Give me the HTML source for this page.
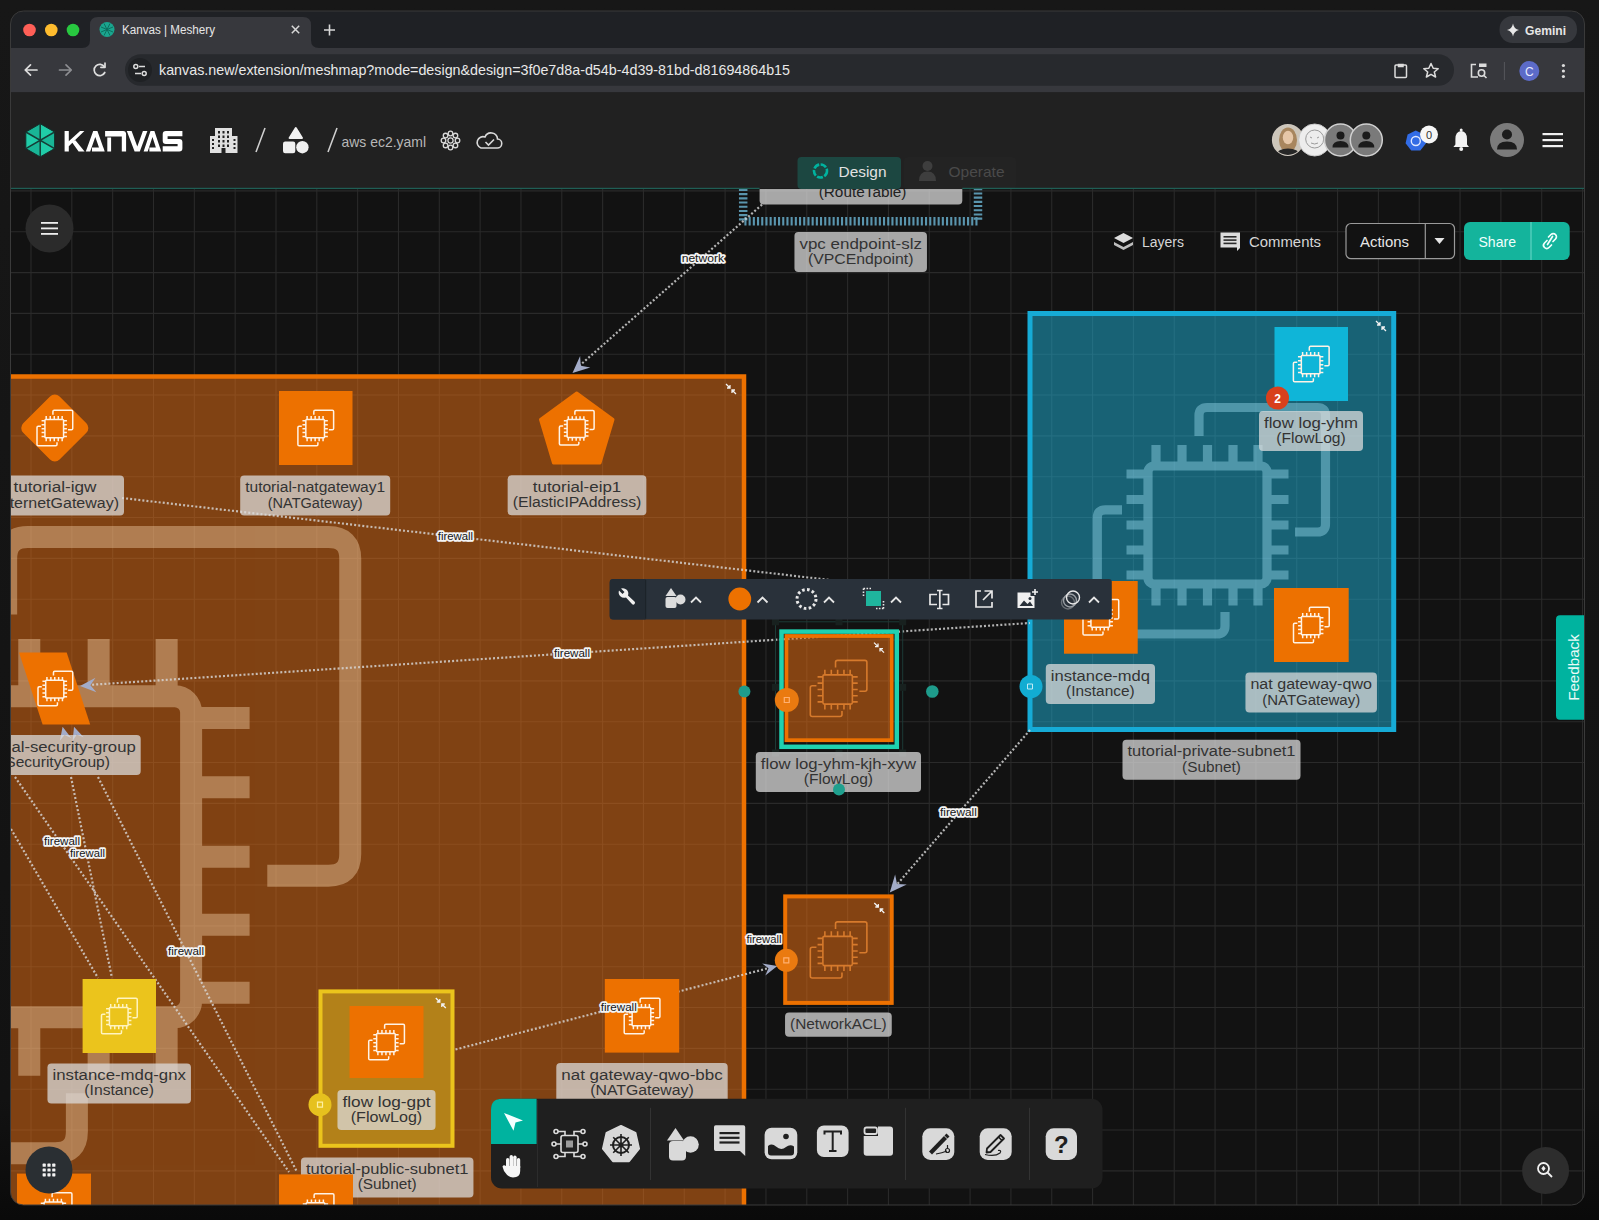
<!DOCTYPE html><html><head><meta charset="utf-8"><title>Kanvas | Meshery</title><style>html,body{margin:0;padding:0;background:#141414;width:1599px;height:1220px;overflow:hidden}svg{display:block}</style></head><body><svg width="1599" height="1220" viewBox="0 0 1599 1220" font-family='"Liberation Sans", sans-serif'><defs><clipPath id="win"><rect x="10.5" y="11" width="1574" height="1194" rx="13"/></clipPath><clipPath id="canvas"><rect x="0" y="189" width="1599" height="1031"/></clipPath></defs><defs><linearGradient id="outer" x1="0" y1="0" x2="0" y2="1"><stop offset="0" stop-color="#171717"/><stop offset="0.9" stop-color="#121212"/><stop offset="1" stop-color="#0a0a0a"/></linearGradient></defs><rect width="1599" height="1220" fill="url(#outer)"/><g clip-path="url(#win)"><g clip-path="url(#canvas)"><rect x="0" y="189" width="1599" height="1031" fill="#121212"/><path d="M-9.83,189 V1220 M31.00,189 V1220 M71.83,189 V1220 M112.66,189 V1220 M153.49,189 V1220 M194.32,189 V1220 M235.15,189 V1220 M275.98,189 V1220 M316.81,189 V1220 M357.64,189 V1220 M398.47,189 V1220 M439.30,189 V1220 M480.13,189 V1220 M520.96,189 V1220 M561.79,189 V1220 M602.62,189 V1220 M643.45,189 V1220 M684.28,189 V1220 M725.11,189 V1220 M765.94,189 V1220 M806.77,189 V1220 M847.60,189 V1220 M888.43,189 V1220 M929.26,189 V1220 M970.09,189 V1220 M1010.92,189 V1220 M1051.75,189 V1220 M1092.58,189 V1220 M1133.41,189 V1220 M1174.24,189 V1220 M1215.07,189 V1220 M1255.90,189 V1220 M1296.73,189 V1220 M1337.56,189 V1220 M1378.39,189 V1220 M1419.22,189 V1220 M1460.05,189 V1220 M1500.88,189 V1220 M1541.71,189 V1220 M1582.54,189 V1220 M0,190.92 H1599 M0,231.75 H1599 M0,272.58 H1599 M0,313.41 H1599 M0,354.24 H1599 M0,395.07 H1599 M0,435.90 H1599 M0,476.73 H1599 M0,517.56 H1599 M0,558.39 H1599 M0,599.22 H1599 M0,640.05 H1599 M0,680.88 H1599 M0,721.71 H1599 M0,762.54 H1599 M0,803.37 H1599 M0,844.20 H1599 M0,885.03 H1599 M0,925.86 H1599 M0,966.69 H1599 M0,1007.52 H1599 M0,1048.35 H1599 M0,1089.18 H1599 M0,1130.01 H1599 M0,1170.84 H1599 M0,1211.67 H1599" stroke="#2a2a2a" stroke-width="1.1"/><rect x="743.2" y="150" width="234.8" height="71.3" fill="none" stroke="#5a95ae" stroke-width="8.5" stroke-dasharray="2.1 2.1"/><rect x="-700" y="376.5" width="1444" height="1000" fill="rgba(237,113,20,0.5)" stroke="#ed7100" stroke-width="4.5"/><rect x="1030" y="313.5" width="363.7" height="416" fill="rgba(30,178,215,0.5)" stroke="#16abd6" stroke-width="5"/><g fill="none" stroke="#a8eaff" stroke-width="9.2" opacity="0.38" stroke-linejoin="round"><path d="M1199.00,436.00 V415.50 Q1199.00,407.50 1207.00,407.50 H1317.50 Q1325.50,407.50 1325.50,415.50 V524.00 Q1325.50,532.00 1317.50,532.00 H1295.00"/><path d="M1122.00,509.80 H1105.30 Q1097.30,509.80 1097.30,517.80 V626.00 Q1097.30,634.00 1105.30,634.00 H1217.00 Q1225.00,634.00 1225.00,626.00 V612.00"/><rect x="1148.00" y="466.00" width="119.00" height="118.00" rx="6.00"/><path d="M1156.00,445.00 V466.00 M1156.00,584.00 V605.50 M1182.00,445.00 V466.00 M1182.00,584.00 V605.50 M1207.50,445.00 V466.00 M1207.50,584.00 V605.50 M1233.00,445.00 V466.00 M1233.00,584.00 V605.50 M1258.00,445.00 V466.00 M1258.00,584.00 V605.50 M1126.50,474.00 H1148.00 M1267.00,474.00 H1288.50 M1126.50,499.50 H1148.00 M1267.00,499.50 H1288.50 M1126.50,525.00 H1148.00 M1267.00,525.00 H1288.50 M1126.50,550.00 H1148.00 M1267.00,550.00 H1288.50 M1126.50,575.00 H1148.00 M1267.00,575.00 H1288.50" stroke-linecap="butt"/></g><g fill="none" stroke="#ffe0b8" stroke-width="22" opacity="0.38" stroke-linejoin="round"><path d="M6.16,614.60 V558.84 Q6.16,537.08 27.92,537.08 H328.48 Q350.24,537.08 350.24,558.84 V853.96 Q350.24,875.72 328.48,875.72 H267.28"/><path d="M-203.28,815.34 H-248.70 Q-270.46,815.34 -270.46,837.10 V1131.40 Q-270.46,1153.16 -248.70,1153.16 H55.12 Q76.88,1153.16 76.88,1131.40 V1093.32"/><rect x="-132.56" y="696.20" width="323.68" height="320.96" rx="16.32"/><path d="M-110.80,639.08 V696.20 M-110.80,1017.16 V1075.64 M-40.08,639.08 V696.20 M-40.08,1017.16 V1075.64 M29.28,639.08 V696.20 M29.28,1017.16 V1075.64 M98.64,639.08 V696.20 M98.64,1017.16 V1075.64 M166.64,639.08 V696.20 M166.64,1017.16 V1075.64 M-191.04,717.96 H-132.56 M191.12,717.96 H249.60 M-191.04,787.32 H-132.56 M191.12,787.32 H249.60 M-191.04,856.68 H-132.56 M191.12,856.68 H249.60 M-191.04,924.68 H-132.56 M191.12,924.68 H249.60 M-191.04,992.68 H-132.56 M191.12,992.68 H249.60" stroke-linecap="butt"/></g><line x1="762" y1="204.6" x2="578" y2="367" stroke="rgba(215,215,215,0.82)" stroke-width="2.2" stroke-dasharray="2 2.1"/><path d="M572.50,373.00 L580.13,355.99 L580.76,365.66 L590.29,367.43 Z" fill="#a3acc8"/><line x1="122" y1="498" x2="830" y2="580" stroke="rgba(215,215,215,0.82)" stroke-width="2.2" stroke-dasharray="2 2.1"/><line x1="88" y1="685" x2="1030" y2="623" stroke="rgba(215,215,215,0.82)" stroke-width="2.2" stroke-dasharray="2 2.1"/><path d="M80.00,686.00 L95.49,677.76 L90.38,685.31 L96.44,692.13 Z" fill="#a3acc8"/><line x1="1030" y1="730" x2="894" y2="888" stroke="rgba(215,215,215,0.82)" stroke-width="2.2" stroke-dasharray="2 2.1"/><path d="M889.80,892.40 L895.12,874.53 L897.02,884.04 L906.70,884.53 Z" fill="#a3acc8"/><line x1="455.5" y1="1049.5" x2="771" y2="967.5" stroke="rgba(215,215,215,0.82)" stroke-width="2.2" stroke-dasharray="2 2.1"/><path d="M777.30,966.00 L765.33,975.61 L768.49,968.29 L762.17,963.42 Z" fill="#a3acc8"/><line x1="11" y1="829" x2="98" y2="978" stroke="rgba(215,215,215,0.82)" stroke-width="2.2" stroke-dasharray="2 2.1"/><line x1="15" y1="777" x2="289" y2="1172" stroke="rgba(215,215,215,0.82)" stroke-width="2.2" stroke-dasharray="2 2.1"/><line x1="71" y1="777" x2="112" y2="978" stroke="rgba(215,215,215,0.82)" stroke-width="2.2" stroke-dasharray="2 2.1"/><line x1="98" y1="777" x2="297" y2="1172" stroke="rgba(215,215,215,0.82)" stroke-width="2.2" stroke-dasharray="2 2.1"/><path d="M62.60,726.70 L71.24,738.04 L64.51,734.93 L59.85,740.69 Z" fill="#a3acc8"/><path d="M74.00,726.70 L83.70,737.14 L76.70,734.71 L72.62,740.89 Z" fill="#a3acc8"/><path d="M54.8,401.2 L81.6,428 L54.8,454.8 L27.999999999999996,428 Z" fill="#ed7100" stroke="#ed7100" stroke-width="13.5" stroke-linejoin="round"/><g fill="none" stroke="#fff3e6" stroke-width="1.5" opacity="1.0" stroke-linejoin="round"><path d="M52.92,414.70 V411.49 Q52.92,410.23 54.17,410.23 H71.47 Q72.72,410.23 72.72,411.49 V428.47 Q72.72,429.72 71.47,429.72 H67.95"/><path d="M40.87,426.25 H38.26 Q37.00,426.25 37.00,427.50 V444.43 Q37.00,445.69 38.26,445.69 H55.74 Q56.99,445.69 56.99,444.43 V442.24"/><rect x="44.94" y="419.39" width="18.63" height="18.47" rx="0.94"/><path d="M46.19,416.10 V419.39 M46.19,437.86 V441.23 M50.26,416.10 V419.39 M50.26,437.86 V441.23 M54.25,416.10 V419.39 M54.25,437.86 V441.23 M58.24,416.10 V419.39 M58.24,437.86 V441.23 M62.16,416.10 V419.39 M62.16,437.86 V441.23 M41.57,420.64 H44.94 M63.57,420.64 H66.93 M41.57,424.63 H44.94 M63.57,424.63 H66.93 M41.57,428.63 H44.94 M63.57,428.63 H66.93 M41.57,432.54 H44.94 M63.57,432.54 H66.93 M41.57,436.45 H44.94 M63.57,436.45 H66.93" stroke-linecap="butt"/></g><rect x="-14.00" y="475.50" width="138.00" height="40.00" rx="4" fill="rgba(220,220,220,0.74)"/><text x="55.00" y="492.09" text-anchor="middle" font-size="14" textLength="82.90" lengthAdjust="spacingAndGlyphs" fill="#333333">tutorial-igw</text><text x="55.00" y="507.59" text-anchor="middle" font-size="14" textLength="128.00" lengthAdjust="spacingAndGlyphs" fill="#333333">(InternetGateway)</text><rect x="279" y="391" width="73.5" height="74" fill="#ed7100"/><g fill="none" stroke="#fff3e6" stroke-width="1.5" opacity="1.0" stroke-linejoin="round"><path d="M313.82,414.70 V411.49 Q313.82,410.23 315.07,410.23 H332.37 Q333.62,410.23 333.62,411.49 V428.47 Q333.62,429.72 332.37,429.72 H328.85"/><path d="M301.77,426.25 H299.16 Q297.90,426.25 297.90,427.50 V444.43 Q297.90,445.69 299.16,445.69 H316.64 Q317.89,445.69 317.89,444.43 V442.24"/><rect x="305.84" y="419.39" width="18.63" height="18.47" rx="0.94"/><path d="M307.09,416.10 V419.39 M307.09,437.86 V441.23 M311.16,416.10 V419.39 M311.16,437.86 V441.23 M315.15,416.10 V419.39 M315.15,437.86 V441.23 M319.14,416.10 V419.39 M319.14,437.86 V441.23 M323.06,416.10 V419.39 M323.06,437.86 V441.23 M302.47,420.64 H305.84 M324.47,420.64 H327.83 M302.47,424.63 H305.84 M324.47,424.63 H327.83 M302.47,428.63 H305.84 M324.47,428.63 H327.83 M302.47,432.54 H305.84 M324.47,432.54 H327.83 M302.47,436.45 H305.84 M324.47,436.45 H327.83" stroke-linecap="butt"/></g><rect x="240.20" y="475.50" width="150.00" height="40.00" rx="4" fill="rgba(220,220,220,0.74)"/><text x="315.20" y="492.09" text-anchor="middle" font-size="14" textLength="140.00" lengthAdjust="spacingAndGlyphs" fill="#333333">tutorial-natgateway1</text><text x="315.20" y="507.59" text-anchor="middle" font-size="14" textLength="94.82" lengthAdjust="spacingAndGlyphs" fill="#333333">(NATGateway)</text><path d="M576.7,393 L613,419.5 L600,463 H553.5 L540.5,419.5 Z" fill="#ed7100" stroke="#ed7100" stroke-width="3" stroke-linejoin="round"/><g fill="none" stroke="#fff3e6" stroke-width="1.5" opacity="1.0" stroke-linejoin="round"><path d="M574.87,414.87 V411.75 Q574.87,410.53 576.09,410.53 H592.91 Q594.12,410.53 594.12,411.75 V428.26 Q594.12,429.47 592.91,429.47 H589.48"/><path d="M563.16,426.10 H560.62 Q559.40,426.10 559.40,427.31 V443.78 Q559.40,445.00 560.62,445.00 H577.61 Q578.83,445.00 578.83,443.78 V441.65"/><rect x="567.11" y="419.43" width="18.11" height="17.96" rx="0.91"/><path d="M568.33,416.23 V419.43 M568.33,437.39 V440.66 M572.29,416.23 V419.43 M572.29,437.39 V440.66 M576.17,416.23 V419.43 M576.17,437.39 V440.66 M580.05,416.23 V419.43 M580.05,437.39 V440.66 M583.85,416.23 V419.43 M583.85,437.39 V440.66 M563.84,420.65 H567.11 M585.22,420.65 H588.49 M563.84,424.53 H567.11 M585.22,424.53 H588.49 M563.84,428.41 H567.11 M585.22,428.41 H588.49 M563.84,432.21 H567.11 M585.22,432.21 H588.49 M563.84,436.02 H567.11 M585.22,436.02 H588.49" stroke-linecap="butt"/></g><rect x="507.65" y="475.30" width="138.70" height="40.00" rx="4" fill="rgba(220,220,220,0.74)"/><text x="577.00" y="491.89" text-anchor="middle" font-size="14" textLength="88.46" lengthAdjust="spacingAndGlyphs" fill="#333333">tutorial-eip1</text><text x="577.00" y="507.39" text-anchor="middle" font-size="14" textLength="128.70" lengthAdjust="spacingAndGlyphs" fill="#333333">(ElasticIPAddress)</text><path d="M19,652.4 L66.7,652.4 L90.2,724.6 L42.6,724.6 Z" fill="#ed7100"/><g fill="none" stroke="#fff3e6" stroke-width="1.5" opacity="1.0" stroke-linejoin="round"><path d="M53.47,675.57 V672.45 Q53.47,671.23 54.69,671.23 H71.51 Q72.72,671.23 72.72,672.45 V688.96 Q72.72,690.17 71.51,690.17 H68.08"/><path d="M41.76,686.80 H39.22 Q38.00,686.80 38.00,688.01 V704.48 Q38.00,705.70 39.22,705.70 H56.21 Q57.43,705.70 57.43,704.48 V702.35"/><rect x="45.71" y="680.13" width="18.11" height="17.96" rx="0.91"/><path d="M46.93,676.93 V680.13 M46.93,698.09 V701.36 M50.89,676.93 V680.13 M50.89,698.09 V701.36 M54.77,676.93 V680.13 M54.77,698.09 V701.36 M58.65,676.93 V680.13 M58.65,698.09 V701.36 M62.45,676.93 V680.13 M62.45,698.09 V701.36 M42.44,681.35 H45.71 M63.82,681.35 H67.09 M42.44,685.23 H45.71 M63.82,685.23 H67.09 M42.44,689.11 H45.71 M63.82,689.11 H67.09 M42.44,692.91 H45.71 M63.82,692.91 H67.09 M42.44,696.72 H45.71 M63.82,696.72 H67.09" stroke-linecap="butt"/></g><rect x="-30.70" y="735.00" width="171.40" height="40.00" rx="4" fill="rgba(220,220,220,0.74)"/><text x="55.00" y="751.59" text-anchor="middle" font-size="14" textLength="161.40" lengthAdjust="spacingAndGlyphs" fill="#333333">tutorial-security-group</text><text x="55.00" y="767.09" text-anchor="middle" font-size="14" textLength="109.87" lengthAdjust="spacingAndGlyphs" fill="#333333">(SecurityGroup)</text><rect x="1274.5" y="327" width="73.5" height="74" fill="#0fb5d8"/><g fill="none" stroke="#fff3e6" stroke-width="1.5" opacity="1.0" stroke-linejoin="round"><path d="M1309.32,350.70 V347.49 Q1309.32,346.23 1310.57,346.23 H1327.87 Q1329.12,346.23 1329.12,347.49 V364.47 Q1329.12,365.72 1327.87,365.72 H1324.35"/><path d="M1297.27,362.25 H1294.66 Q1293.40,362.25 1293.40,363.50 V380.43 Q1293.40,381.69 1294.66,381.69 H1312.14 Q1313.39,381.69 1313.39,380.43 V378.24"/><rect x="1301.34" y="355.39" width="18.63" height="18.47" rx="0.94"/><path d="M1302.59,352.10 V355.39 M1302.59,373.86 V377.23 M1306.66,352.10 V355.39 M1306.66,373.86 V377.23 M1310.65,352.10 V355.39 M1310.65,373.86 V377.23 M1314.64,352.10 V355.39 M1314.64,373.86 V377.23 M1318.56,352.10 V355.39 M1318.56,373.86 V377.23 M1297.97,356.64 H1301.34 M1319.97,356.64 H1323.33 M1297.97,360.63 H1301.34 M1319.97,360.63 H1323.33 M1297.97,364.63 H1301.34 M1319.97,364.63 H1323.33 M1297.97,368.54 H1301.34 M1319.97,368.54 H1323.33 M1297.97,372.45 H1301.34 M1319.97,372.45 H1323.33" stroke-linecap="butt"/></g><rect x="1259.00" y="411.00" width="104.00" height="40.00" rx="4" fill="rgba(220,220,220,0.74)"/><text x="1311.00" y="427.59" text-anchor="middle" font-size="14" textLength="94.00" lengthAdjust="spacingAndGlyphs" fill="#333333">flow log-yhm</text><text x="1311.00" y="443.09" text-anchor="middle" font-size="14" textLength="69.45" lengthAdjust="spacingAndGlyphs" fill="#333333">(FlowLog)</text><circle cx="1277.5" cy="398" r="11.5" fill="#d8401c"/><text x="1277.5" y="402.5" text-anchor="middle" font-size="12" font-weight="700" fill="#fff">2</text><rect x="1064" y="581" width="73.7" height="72.7" fill="#ed7100"/><g fill="none" stroke="#fff3e6" stroke-width="1.5" opacity="1.0" stroke-linejoin="round"><path d="M1098.92,604.00 V600.79 Q1098.92,599.53 1100.17,599.53 H1117.47 Q1118.72,599.53 1118.72,600.79 V617.77 Q1118.72,619.02 1117.47,619.02 H1113.95"/><path d="M1086.87,615.55 H1084.26 Q1083.00,615.55 1083.00,616.80 V633.73 Q1083.00,634.99 1084.26,634.99 H1101.74 Q1102.99,634.99 1102.99,633.73 V631.54"/><rect x="1090.94" y="608.69" width="18.63" height="18.47" rx="0.94"/><path d="M1092.19,605.40 V608.69 M1092.19,627.16 V630.53 M1096.26,605.40 V608.69 M1096.26,627.16 V630.53 M1100.25,605.40 V608.69 M1100.25,627.16 V630.53 M1104.24,605.40 V608.69 M1104.24,627.16 V630.53 M1108.16,605.40 V608.69 M1108.16,627.16 V630.53 M1087.57,609.94 H1090.94 M1109.57,609.94 H1112.93 M1087.57,613.93 H1090.94 M1109.57,613.93 H1112.93 M1087.57,617.93 H1090.94 M1109.57,617.93 H1112.93 M1087.57,621.84 H1090.94 M1109.57,621.84 H1112.93 M1087.57,625.75 H1090.94 M1109.57,625.75 H1112.93" stroke-linecap="butt"/></g><rect x="1045.80" y="664.00" width="109.20" height="40.00" rx="4" fill="rgba(220,220,220,0.74)"/><text x="1100.40" y="680.59" text-anchor="middle" font-size="14" textLength="99.20" lengthAdjust="spacingAndGlyphs" fill="#333333">instance-mdq</text><text x="1100.40" y="696.09" text-anchor="middle" font-size="14" textLength="68.53" lengthAdjust="spacingAndGlyphs" fill="#333333">(Instance)</text><rect x="1274" y="588" width="74.7" height="74" fill="#ed7100"/><g fill="none" stroke="#fff3e6" stroke-width="1.5" opacity="1.0" stroke-linejoin="round"><path d="M1309.42,611.70 V608.49 Q1309.42,607.23 1310.67,607.23 H1327.97 Q1329.22,607.23 1329.22,608.49 V625.47 Q1329.22,626.72 1327.97,626.72 H1324.45"/><path d="M1297.37,623.25 H1294.76 Q1293.50,623.25 1293.50,624.50 V641.43 Q1293.50,642.69 1294.76,642.69 H1312.24 Q1313.49,642.69 1313.49,641.43 V639.24"/><rect x="1301.44" y="616.39" width="18.63" height="18.47" rx="0.94"/><path d="M1302.69,613.10 V616.39 M1302.69,634.86 V638.23 M1306.76,613.10 V616.39 M1306.76,634.86 V638.23 M1310.75,613.10 V616.39 M1310.75,634.86 V638.23 M1314.74,613.10 V616.39 M1314.74,634.86 V638.23 M1318.66,613.10 V616.39 M1318.66,634.86 V638.23 M1298.07,617.64 H1301.44 M1320.07,617.64 H1323.43 M1298.07,621.63 H1301.44 M1320.07,621.63 H1323.43 M1298.07,625.63 H1301.44 M1320.07,625.63 H1323.43 M1298.07,629.54 H1301.44 M1320.07,629.54 H1323.43 M1298.07,633.45 H1301.44 M1320.07,633.45 H1323.43" stroke-linecap="butt"/></g><rect x="1245.45" y="672.60" width="131.50" height="40.00" rx="4" fill="rgba(220,220,220,0.74)"/><text x="1311.20" y="689.19" text-anchor="middle" font-size="14" textLength="121.50" lengthAdjust="spacingAndGlyphs" fill="#333333">nat gateway-qwo</text><text x="1311.20" y="704.69" text-anchor="middle" font-size="14" textLength="98.03" lengthAdjust="spacingAndGlyphs" fill="#333333">(NATGateway)</text><rect x="1122.50" y="739.70" width="178.00" height="40.00" rx="4" fill="rgba(220,220,220,0.74)"/><text x="1211.50" y="756.29" text-anchor="middle" font-size="14" textLength="168.00" lengthAdjust="spacingAndGlyphs" fill="#333333">tutorial-private-subnet1</text><text x="1211.50" y="771.79" text-anchor="middle" font-size="14" textLength="58.77" lengthAdjust="spacingAndGlyphs" fill="#333333">(Subnet)</text><circle cx="1031" cy="686.5" r="11.5" fill="#12acd2"/><path d="M1027.5,684 h5 v5 h-5z" stroke="#bfeaf5" stroke-width="1" fill="none"/><rect x="781.5" y="631.6" width="115.3" height="115.2" fill="none" stroke="#1fd1b0" stroke-width="4.5"/><rect x="786.4" y="636" width="105.3" height="104.2" fill="rgba(237,113,20,0.52)" stroke="#ed7100" stroke-width="3.8"/><g fill="none" stroke="#d67a2c" stroke-width="1.6" opacity="1.0" stroke-linejoin="round"><path d="M835.53,667.43 V662.35 Q835.53,660.37 837.51,660.37 H864.89 Q866.88,660.37 866.88,662.35 V689.24 Q866.88,691.23 864.89,691.23 H859.32"/><path d="M816.44,685.72 H812.30 Q810.32,685.72 810.32,687.71 V714.52 Q810.32,716.50 812.30,716.50 H839.99 Q841.97,716.50 841.97,714.52 V711.05"/><rect x="822.89" y="674.87" width="29.49" height="29.24" rx="1.49"/><path d="M824.87,669.67 V674.87 M824.87,704.11 V709.44 M831.31,669.67 V674.87 M831.31,704.11 V709.44 M837.63,669.67 V674.87 M837.63,704.11 V709.44 M843.95,669.67 V674.87 M843.95,704.11 V709.44 M850.15,669.67 V674.87 M850.15,704.11 V709.44 M817.56,676.85 H822.89 M852.38,676.85 H857.71 M817.56,683.17 H822.89 M852.38,683.17 H857.71 M817.56,689.49 H822.89 M852.38,689.49 H857.71 M817.56,695.69 H822.89 M852.38,695.69 H857.71 M817.56,701.88 H822.89 M852.38,701.88 H857.71" stroke-linecap="butt"/></g><rect x="775.5" y="621.8" width="127.2" height="131.2" fill="none" stroke="#1c3a36" stroke-width="1"/><rect x="772.0" y="618.3" width="7" height="7" fill="#18211f"/><rect x="835.5" y="618.3" width="7" height="7" fill="#18211f"/><rect x="899.2" y="618.3" width="7" height="7" fill="#18211f"/><rect x="772.0" y="683.9" width="7" height="7" fill="#18211f"/><rect x="899.2" y="683.9" width="7" height="7" fill="#18211f"/><rect x="772.0" y="749.5" width="7" height="7" fill="#18211f"/><rect x="835.5" y="749.5" width="7" height="7" fill="#18211f"/><rect x="899.2" y="749.5" width="7" height="7" fill="#18211f"/><rect x="755.80" y="752.00" width="165.20" height="40.00" rx="4" fill="rgba(220,220,220,0.74)"/><text x="838.40" y="768.59" text-anchor="middle" font-size="14" textLength="155.20" lengthAdjust="spacingAndGlyphs" fill="#333333">flow log-yhm-kjh-xyw</text><text x="838.40" y="784.09" text-anchor="middle" font-size="14" textLength="69.36" lengthAdjust="spacingAndGlyphs" fill="#333333">(FlowLog)</text><circle cx="786.8" cy="700" r="12" fill="#ea7a10"/><path d="M784.3,697.5 h5 v5 h-5z" stroke="#ffb070" stroke-width="1.2" fill="none"/><circle cx="744.4" cy="691.5" r="6" fill="#1e9c8c"/><circle cx="932.3" cy="691.5" r="6.3" fill="#1e9c8c"/><circle cx="839" cy="789.5" r="6" fill="#1fa08e"/><rect x="785.2" y="896.4" width="106.5" height="106.5" fill="rgba(237,113,20,0.52)" stroke="#ed7100" stroke-width="4"/><g fill="none" stroke="#d67a2c" stroke-width="1.6" opacity="1.0" stroke-linejoin="round"><path d="M835.53,928.93 V923.85 Q835.53,921.87 837.51,921.87 H864.89 Q866.88,921.87 866.88,923.85 V950.74 Q866.88,952.73 864.89,952.73 H859.32"/><path d="M816.44,947.22 H812.30 Q810.32,947.22 810.32,949.21 V976.02 Q810.32,978.00 812.30,978.00 H839.99 Q841.97,978.00 841.97,976.02 V972.55"/><rect x="822.89" y="936.37" width="29.49" height="29.24" rx="1.49"/><path d="M824.87,931.17 V936.37 M824.87,965.61 V970.94 M831.31,931.17 V936.37 M831.31,965.61 V970.94 M837.63,931.17 V936.37 M837.63,965.61 V970.94 M843.95,931.17 V936.37 M843.95,965.61 V970.94 M850.15,931.17 V936.37 M850.15,965.61 V970.94 M817.56,938.35 H822.89 M852.38,938.35 H857.71 M817.56,944.67 H822.89 M852.38,944.67 H857.71 M817.56,950.99 H822.89 M852.38,950.99 H857.71 M817.56,957.19 H822.89 M852.38,957.19 H857.71 M817.56,963.38 H822.89 M852.38,963.38 H857.71" stroke-linecap="butt"/></g><rect x="785.05" y="1012.60" width="106.70" height="24.10" rx="4" fill="rgba(220,220,220,0.74)"/><text x="838.40" y="1028.99" text-anchor="middle" font-size="14" textLength="96.70" lengthAdjust="spacingAndGlyphs" fill="#333333">(NetworkACL)</text><circle cx="786.3" cy="960.3" r="11.5" fill="#ea7a10"/><path d="M783.8,957.8 h5 v5 h-5z" stroke="#ffb070" stroke-width="1.2" fill="none"/><rect x="82.6" y="979" width="73.4" height="74" fill="#ebc41c"/><g fill="none" stroke="#fff4c0" stroke-width="1.5" opacity="1.0" stroke-linejoin="round"><path d="M117.42,1002.70 V999.49 Q117.42,998.23 118.67,998.23 H135.97 Q137.22,998.23 137.22,999.49 V1016.47 Q137.22,1017.72 135.97,1017.72 H132.45"/><path d="M105.37,1014.25 H102.76 Q101.50,1014.25 101.50,1015.50 V1032.43 Q101.50,1033.69 102.76,1033.69 H120.24 Q121.49,1033.69 121.49,1032.43 V1030.24"/><rect x="109.44" y="1007.39" width="18.63" height="18.47" rx="0.94"/><path d="M110.69,1004.10 V1007.39 M110.69,1025.86 V1029.23 M114.76,1004.10 V1007.39 M114.76,1025.86 V1029.23 M118.75,1004.10 V1007.39 M118.75,1025.86 V1029.23 M122.74,1004.10 V1007.39 M122.74,1025.86 V1029.23 M126.66,1004.10 V1007.39 M126.66,1025.86 V1029.23 M106.07,1008.64 H109.44 M128.07,1008.64 H131.43 M106.07,1012.63 H109.44 M128.07,1012.63 H131.43 M106.07,1016.63 H109.44 M128.07,1016.63 H131.43 M106.07,1020.54 H109.44 M128.07,1020.54 H131.43 M106.07,1024.45 H109.44 M128.07,1024.45 H131.43" stroke-linecap="butt"/></g><rect x="47.45" y="1063.40" width="143.50" height="40.00" rx="4" fill="rgba(220,220,220,0.74)"/><text x="119.20" y="1079.99" text-anchor="middle" font-size="14" textLength="133.50" lengthAdjust="spacingAndGlyphs" fill="#333333">instance-mdq-gnx</text><text x="119.20" y="1095.49" text-anchor="middle" font-size="14" textLength="69.66" lengthAdjust="spacingAndGlyphs" fill="#333333">(Instance)</text><rect x="320.5" y="991.4" width="132" height="154.4" fill="#b38119" stroke="#ebc41c" stroke-width="4"/><rect x="349.5" y="1006" width="74" height="72" fill="#ed7100"/><g fill="none" stroke="#fff3e6" stroke-width="1.5" opacity="1.0" stroke-linejoin="round"><path d="M384.62,1028.70 V1025.49 Q384.62,1024.23 385.87,1024.23 H403.17 Q404.42,1024.23 404.42,1025.49 V1042.47 Q404.42,1043.72 403.17,1043.72 H399.65"/><path d="M372.57,1040.25 H369.96 Q368.70,1040.25 368.70,1041.50 V1058.43 Q368.70,1059.69 369.96,1059.69 H387.44 Q388.69,1059.69 388.69,1058.43 V1056.24"/><rect x="376.64" y="1033.39" width="18.63" height="18.47" rx="0.94"/><path d="M377.89,1030.10 V1033.39 M377.89,1051.86 V1055.23 M381.96,1030.10 V1033.39 M381.96,1051.86 V1055.23 M385.95,1030.10 V1033.39 M385.95,1051.86 V1055.23 M389.94,1030.10 V1033.39 M389.94,1051.86 V1055.23 M393.86,1030.10 V1033.39 M393.86,1051.86 V1055.23 M373.27,1034.64 H376.64 M395.27,1034.64 H398.63 M373.27,1038.63 H376.64 M395.27,1038.63 H398.63 M373.27,1042.63 H376.64 M395.27,1042.63 H398.63 M373.27,1046.54 H376.64 M395.27,1046.54 H398.63 M373.27,1050.45 H376.64 M395.27,1050.45 H398.63" stroke-linecap="butt"/></g><rect x="337.45" y="1090.00" width="98.10" height="40.00" rx="4" fill="rgba(220,220,220,0.74)"/><text x="386.50" y="1106.59" text-anchor="middle" font-size="14" textLength="88.10" lengthAdjust="spacingAndGlyphs" fill="#333333">flow log-gpt</text><text x="386.50" y="1122.09" text-anchor="middle" font-size="14" textLength="71.46" lengthAdjust="spacingAndGlyphs" fill="#333333">(FlowLog)</text><circle cx="320" cy="1104.7" r="11.5" fill="#e6c11e"/><path d="M317.5,1102.2 h5 v5 h-5z" stroke="#fff0a0" stroke-width="1.2" fill="none"/><rect x="604.8" y="979" width="74.4" height="73.6" fill="#ed7100"/><g fill="none" stroke="#fff3e6" stroke-width="1.5" opacity="1.0" stroke-linejoin="round"><path d="M640.12,1002.70 V999.49 Q640.12,998.23 641.37,998.23 H658.67 Q659.92,998.23 659.92,999.49 V1016.47 Q659.92,1017.72 658.67,1017.72 H655.15"/><path d="M628.07,1014.25 H625.46 Q624.20,1014.25 624.20,1015.50 V1032.43 Q624.20,1033.69 625.46,1033.69 H642.94 Q644.19,1033.69 644.19,1032.43 V1030.24"/><rect x="632.14" y="1007.39" width="18.63" height="18.47" rx="0.94"/><path d="M633.39,1004.10 V1007.39 M633.39,1025.86 V1029.23 M637.46,1004.10 V1007.39 M637.46,1025.86 V1029.23 M641.45,1004.10 V1007.39 M641.45,1025.86 V1029.23 M645.44,1004.10 V1007.39 M645.44,1025.86 V1029.23 M649.36,1004.10 V1007.39 M649.36,1025.86 V1029.23 M628.77,1008.64 H632.14 M650.77,1008.64 H654.13 M628.77,1012.63 H632.14 M650.77,1012.63 H654.13 M628.77,1016.63 H632.14 M650.77,1016.63 H654.13 M628.77,1020.54 H632.14 M650.77,1020.54 H654.13 M628.77,1024.45 H632.14 M650.77,1024.45 H654.13" stroke-linecap="butt"/></g><rect x="556.30" y="1063.00" width="171.40" height="40.00" rx="4" fill="rgba(220,220,220,0.74)"/><text x="642.00" y="1079.59" text-anchor="middle" font-size="14" textLength="161.40" lengthAdjust="spacingAndGlyphs" fill="#333333">nat gateway-qwo-bbc</text><text x="642.00" y="1095.09" text-anchor="middle" font-size="14" textLength="103.57" lengthAdjust="spacingAndGlyphs" fill="#333333">(NATGateway)</text><rect x="300.95" y="1157.40" width="172.50" height="40.00" rx="4" fill="rgba(220,220,220,0.74)"/><text x="387.20" y="1173.99" text-anchor="middle" font-size="14" textLength="162.50" lengthAdjust="spacingAndGlyphs" fill="#333333">tutorial-public-subnet1</text><text x="387.20" y="1189.49" text-anchor="middle" font-size="14" textLength="59.09" lengthAdjust="spacingAndGlyphs" fill="#333333">(Subnet)</text><rect x="17" y="1173.6" width="74" height="74" fill="#ed7100"/><g fill="none" stroke="#fff3e6" stroke-width="1.5" opacity="1.0" stroke-linejoin="round"><path d="M52.12,1197.30 V1194.09 Q52.12,1192.83 53.37,1192.83 H70.67 Q71.92,1192.83 71.92,1194.09 V1211.07 Q71.92,1212.32 70.67,1212.32 H67.15"/><path d="M40.07,1208.85 H37.46 Q36.20,1208.85 36.20,1210.10 V1227.03 Q36.20,1228.29 37.46,1228.29 H54.94 Q56.19,1228.29 56.19,1227.03 V1224.84"/><rect x="44.14" y="1201.99" width="18.63" height="18.47" rx="0.94"/><path d="M45.39,1198.70 V1201.99 M45.39,1220.46 V1223.83 M49.46,1198.70 V1201.99 M49.46,1220.46 V1223.83 M53.45,1198.70 V1201.99 M53.45,1220.46 V1223.83 M57.44,1198.70 V1201.99 M57.44,1220.46 V1223.83 M61.36,1198.70 V1201.99 M61.36,1220.46 V1223.83 M40.77,1203.24 H44.14 M62.77,1203.24 H66.13 M40.77,1207.23 H44.14 M62.77,1207.23 H66.13 M40.77,1211.23 H44.14 M62.77,1211.23 H66.13 M40.77,1215.14 H44.14 M62.77,1215.14 H66.13 M40.77,1219.05 H44.14 M62.77,1219.05 H66.13" stroke-linecap="butt"/></g><rect x="279" y="1174.4" width="74" height="74" fill="#ed7100"/><g fill="none" stroke="#fff3e6" stroke-width="1.5" opacity="1.0" stroke-linejoin="round"><path d="M314.12,1198.10 V1194.89 Q314.12,1193.63 315.37,1193.63 H332.67 Q333.92,1193.63 333.92,1194.89 V1211.87 Q333.92,1213.12 332.67,1213.12 H329.15"/><path d="M302.07,1209.65 H299.46 Q298.20,1209.65 298.20,1210.90 V1227.83 Q298.20,1229.09 299.46,1229.09 H316.94 Q318.19,1229.09 318.19,1227.83 V1225.64"/><rect x="306.14" y="1202.79" width="18.63" height="18.47" rx="0.94"/><path d="M307.39,1199.50 V1202.79 M307.39,1221.26 V1224.63 M311.46,1199.50 V1202.79 M311.46,1221.26 V1224.63 M315.45,1199.50 V1202.79 M315.45,1221.26 V1224.63 M319.44,1199.50 V1202.79 M319.44,1221.26 V1224.63 M323.36,1199.50 V1202.79 M323.36,1221.26 V1224.63 M302.77,1204.04 H306.14 M324.77,1204.04 H328.13 M302.77,1208.03 H306.14 M324.77,1208.03 H328.13 M302.77,1212.03 H306.14 M324.77,1212.03 H328.13 M302.77,1215.94 H306.14 M324.77,1215.94 H328.13 M302.77,1219.85 H306.14 M324.77,1219.85 H328.13" stroke-linecap="butt"/></g><rect x="759.6" y="160" width="202.7" height="44.5" rx="4" fill="rgba(220,220,220,0.74)"/><text x="862.6" y="196.5" text-anchor="middle" font-size="14" textLength="87.8" lengthAdjust="spacingAndGlyphs" fill="#222">(RouteTable)</text><rect x="794.45" y="232.00" width="132.50" height="40.00" rx="4" fill="rgba(220,220,220,0.74)"/><text x="860.70" y="248.59" text-anchor="middle" font-size="14" textLength="122.50" lengthAdjust="spacingAndGlyphs" fill="#333333">vpc endpoint-slz</text><text x="860.70" y="264.09" text-anchor="middle" font-size="14" textLength="105.48" lengthAdjust="spacingAndGlyphs" fill="#333333">(VPCEndpoint)</text><g stroke="#f2f2f2" stroke-width="1.3" fill="none"><path d="M726,384 L730,388 M730,385 V388 H727"/><path d="M736,394 L732,390 M732,393 V390 H735"/></g><g stroke="#f2f2f2" stroke-width="1.3" fill="none"><path d="M1376,321 L1380,325 M1380,322 V325 H1377"/><path d="M1386,331 L1382,327 M1382,330 V327 H1385"/></g><g stroke="#f2f2f2" stroke-width="1.3" fill="none"><path d="M874,642.6 L878,646.6 M878,643.6 V646.6 H875"/><path d="M884,652.6 L880,648.6 M880,651.6 V648.6 H883"/></g><g stroke="#f2f2f2" stroke-width="1.3" fill="none"><path d="M874.3,903 L878.3,907 M878.3,904 V907 H875.3"/><path d="M884.3,913 L880.3,909 M880.3,912 V909 H883.3"/></g><g stroke="#f2f2f2" stroke-width="1.3" fill="none"><path d="M435.8,998 L439.8,1002 M439.8,999 V1002 H436.8"/><path d="M445.8,1008 L441.8,1004 M441.8,1007 V1004 H444.8"/></g><text x="702.85" y="262.05" text-anchor="middle" font-size="11.5" textLength="42.30" lengthAdjust="spacingAndGlyphs" fill="#151515" stroke="#f4f4f4" stroke-width="3.4" paint-order="stroke" stroke-linejoin="round">network</text><text x="455.40" y="540.20" text-anchor="middle" font-size="11.5" textLength="35.20" lengthAdjust="spacingAndGlyphs" fill="#151515" stroke="#f4f4f4" stroke-width="3.4" paint-order="stroke" stroke-linejoin="round">firewall</text><text x="572.00" y="656.50" text-anchor="middle" font-size="11.5" textLength="36.00" lengthAdjust="spacingAndGlyphs" fill="#151515" stroke="#f4f4f4" stroke-width="3.4" paint-order="stroke" stroke-linejoin="round">firewall</text><text x="958.40" y="815.60" text-anchor="middle" font-size="11.5" textLength="36.80" lengthAdjust="spacingAndGlyphs" fill="#151515" stroke="#f4f4f4" stroke-width="3.4" paint-order="stroke" stroke-linejoin="round">firewall</text><text x="618.75" y="1010.80" text-anchor="middle" font-size="11.5" textLength="36.10" lengthAdjust="spacingAndGlyphs" fill="#151515" stroke="#f4f4f4" stroke-width="3.4" paint-order="stroke" stroke-linejoin="round">firewall</text><text x="764.00" y="943.20" text-anchor="middle" font-size="11.5" textLength="35.00" lengthAdjust="spacingAndGlyphs" fill="#151515" stroke="#f4f4f4" stroke-width="3.4" paint-order="stroke" stroke-linejoin="round">firewall</text><text x="62.00" y="845.25" text-anchor="middle" font-size="11.5" textLength="36.00" lengthAdjust="spacingAndGlyphs" fill="#151515" stroke="#f4f4f4" stroke-width="3.4" paint-order="stroke" stroke-linejoin="round">firewall</text><text x="87.50" y="856.75" text-anchor="middle" font-size="11.5" textLength="35.00" lengthAdjust="spacingAndGlyphs" fill="#151515" stroke="#f4f4f4" stroke-width="3.4" paint-order="stroke" stroke-linejoin="round">firewall</text><text x="186.00" y="954.65" text-anchor="middle" font-size="11.5" textLength="36.00" lengthAdjust="spacingAndGlyphs" fill="#151515" stroke="#f4f4f4" stroke-width="3.4" paint-order="stroke" stroke-linejoin="round">firewall</text><rect x="609.7" y="579" width="502.1" height="40.5" rx="3" fill="#29313a"/><path d="M613.7,579 H645.6 V619.5 H613.7 Q609.7,619.5 609.7,615.5 V583 Q609.7,579 613.7,579 Z" fill="#232b33"/><path d="M645.6,580 V618.5" stroke="#1c2329" stroke-width="1.2"/><g fill="#f0f0f0"><path d="M619,590.5 A5.5,5.5 0 0 0 626,597.5 L632,604 A1.7,1.7 0 0 0 634.5,601.5 L628,595.5 A5.5,5.5 0 0 0 621,588.5 L624.5,592 L622.5,594 Z"/></g><g fill="#dcdcdc"><path d="M671,588 L676.5,596 H665.5 Z"/><rect x="665.5" y="597" width="11" height="11" rx="2"/><circle cx="680.5" cy="599.5" r="5"/></g><path d="M691,602.5 L696,597.5 L701,602.5" stroke="#e6e6e6" stroke-width="1.8" fill="none"/><circle cx="739.8" cy="599" r="11.4" fill="#ed7100"/><path d="M757.5,602.5 L762.5,597.5 L767.5,602.5" stroke="#e6e6e6" stroke-width="1.8" fill="none"/><circle cx="806.5" cy="599" r="9.5" stroke="#e8e8e8" stroke-width="3" fill="none" stroke-dasharray="2.6 2.4"/><path d="M824,602.5 L829,597.5 L834,602.5" stroke="#e6e6e6" stroke-width="1.8" fill="none"/><rect x="866" y="591" width="15" height="15" fill="#1fb59d"/><path d="M863.5,588.5 V596 M863.5,588.5 H871 M883.5,608.5 V601 M883.5,608.5 H876" stroke="#e8e8e8" stroke-width="1.6" stroke-dasharray="1.6 1.4" fill="none"/><path d="M891,602.5 L896,597.5 L901,602.5" stroke="#e6e6e6" stroke-width="1.8" fill="none"/><g stroke="#e8e8e8" stroke-width="1.7" fill="none"><path d="M937,594.5 H930 V604.5 H937"/><path d="M942.5,594.5 H948.5 V604.5 H942.5"/><path d="M939.8,590.5 V608.5 M937,590.5 H942.5 M937,608.5 H942.5"/></g><g stroke="#e8e8e8" stroke-width="1.7" fill="none"><path d="M981,591 H976 V607 H992 V602"/><path d="M984.5,591 H992 V598.5 M992,591 L983,600"/></g><path d="M1018.5,593.5 H1030 V607 H1018.5 Z" fill="#f0f0f0"/><path d="M1030,607 H1035.5 V597" stroke="#f0f0f0" stroke-width="0" fill="none"/><path d="M1017.5,592.5 H1030.5 V596 H1034.5 V608 H1017.5 Z" fill="#f0f0f0"/><path d="M1019.5,606 L1024,600.5 L1027.5,604 L1030,601.5 L1033,606 Z" fill="#29313a"/><circle cx="1030" cy="598.5" r="1.5" fill="#29313a"/><path d="M1035,589 V595 M1032,592 H1038" stroke="#f0f0f0" stroke-width="1.6"/><g fill="none" stroke-width="1.4"><circle cx="1068" cy="602.5" r="6.5" stroke="#6a6f74"/><circle cx="1070" cy="600.5" r="6.5" stroke="#9a9fa4"/><circle cx="1073" cy="597.5" r="6.5" stroke="#e8e8e8"/></g><path d="M1089,602.5 L1094,597.5 L1099,602.5" stroke="#e6e6e6" stroke-width="1.8" fill="none"/><circle cx="49.5" cy="228.5" r="24" fill="#2b2b2b"/><g fill="#eeeeee"><rect x="41" y="222" width="17" height="1.8"/><rect x="41" y="227.5" width="17" height="1.8"/><rect x="41" y="233" width="17" height="1.8"/></g><g fill="#dcdcdc"><path d="M1123.5,233 L1133,238 L1123.5,243 L1114,238 Z"/><path d="M1114,242 L1123.5,247 L1133,242 L1133,245 L1123.5,250 L1114,245 Z" opacity="0.85"/></g><text x="1142" y="246.5" font-size="14" fill="#d6d6d6" textLength="42" lengthAdjust="spacingAndGlyphs">Layers</text><path d="M1220.5,232.5 H1240 V248 L1237,251 V247.5 H1220.5 Z" fill="#dcdcdc"/><g fill="#2a2a2a"><rect x="1223.5" y="236" width="13" height="1.6"/><rect x="1223.5" y="239.3" width="13" height="1.6"/><rect x="1223.5" y="242.6" width="13" height="1.6"/></g><text x="1249" y="246.5" font-size="14" fill="#d6d6d6" textLength="72" lengthAdjust="spacingAndGlyphs">Comments</text><rect x="1346" y="223.5" width="108.5" height="35.2" rx="5" fill="#121212" stroke="#9a9a9a" stroke-width="1.2"/><path d="M1425.3,224 V258.2" stroke="#9a9a9a" stroke-width="1.2"/><text x="1360" y="246.5" font-size="14.5" fill="#e6e6e6" textLength="49" lengthAdjust="spacingAndGlyphs">Actions</text><path d="M1434.5,238 H1444.5 L1439.5,244 Z" fill="#e6e6e6"/><rect x="1464" y="222" width="105.7" height="38" rx="6" fill="#14b49c"/><path d="M1531,222 V260" stroke="#5fd3c3" stroke-width="1.2"/><text x="1478.5" y="246.5" font-size="14.5" fill="#f0fffc" textLength="37.5" lengthAdjust="spacingAndGlyphs">Share</text><g stroke="#f0fffc" stroke-width="1.7" fill="none" stroke-linecap="round"><path d="M1547,240.5 L1544.5,243 A3,3 0 0 0 1549,247.5 L1551.5,245"/><path d="M1553,241.5 L1555.5,239 A3,3 0 0 0 1551,234.5 L1548.5,237"/><path d="M1547.5,244.5 L1552.5,236.5"/></g><path d="M1585,615.2 H1560 Q1556,615.2 1556,619.2 V715.8 Q1556,719.8 1560,719.8 H1585 Z" fill="#00b39f"/><text x="0" y="0" font-size="14" fill="#eafaf7" textLength="66.5" lengthAdjust="spacingAndGlyphs" transform="translate(1578.8,700.8) rotate(-90)">Feedback</text><circle cx="1545.6" cy="1170.6" r="23.5" fill="#2d2d2d"/><g stroke="#f0f0f0" stroke-width="1.8" fill="none"><circle cx="1543.5" cy="1168.5" r="5.5"/><path d="M1547.5,1172.5 L1552,1177"/></g><path d="M1543.5,1165.8 L1545.6,1168.5 L1543.5,1171.2 L1541.4,1168.5 Z" fill="#f0f0f0"/><circle cx="49" cy="1170" r="23.5" fill="#2a2f33"/><g fill="#f2f2f2"><rect x="42.6" y="1163.6000000000001" width="3.2" height="3.2" rx="0.6"/><rect x="42.6" y="1168.4" width="3.2" height="3.2" rx="0.6"/><rect x="42.6" y="1173.2" width="3.2" height="3.2" rx="0.6"/><rect x="47.4" y="1163.6000000000001" width="3.2" height="3.2" rx="0.6"/><rect x="47.4" y="1168.4" width="3.2" height="3.2" rx="0.6"/><rect x="47.4" y="1173.2" width="3.2" height="3.2" rx="0.6"/><rect x="52.199999999999996" y="1163.6000000000001" width="3.2" height="3.2" rx="0.6"/><rect x="52.199999999999996" y="1168.4" width="3.2" height="3.2" rx="0.6"/><rect x="52.199999999999996" y="1173.2" width="3.2" height="3.2" rx="0.6"/></g><rect x="491" y="1098.8" width="611.5" height="89.7" rx="11" fill="#1f1f1f"/><path d="M491,1144 V1109.8 Q491,1098.8 502,1098.8 H536.6 V1144 Z" fill="#00b39f"/><path d="M537.5,1100 V1187" stroke="#2c2c2c" stroke-width="1"/><path d="M650.5,1107.8 V1180" stroke="#333" stroke-width="1"/><path d="M905.5,1107.8 V1180" stroke="#333" stroke-width="1"/><path d="M1029.5,1107.8 V1180" stroke="#333" stroke-width="1"/><path d="M504,1112.9 L523,1120.5 L515.5,1122.5 L513.5,1130.7 Z" fill="#f4ffff"/><g fill="#f6f6f6"><rect x="506" y="1158" width="3.4" height="11" rx="1.7"/><rect x="509.6" y="1155" width="3.4" height="13" rx="1.7"/><rect x="513.2" y="1155.5" width="3.4" height="13" rx="1.7"/><rect x="516.8" y="1158" width="3.4" height="11" rx="1.7"/><path d="M506,1166 H520.2 V1171 Q520.2,1177.5 513,1177.5 Q508,1177.5 504,1171 L502.5,1166.5 Q503.5,1164.5 506,1166 Z"/></g><g stroke="#dcdcdc" stroke-width="1.6" fill="none"><rect x="561" y="1135.5" width="17" height="17" rx="2"/><path d="M556,1144 H561 M578,1144 H583 M565,1135.5 V1131.5 H558 M574,1135.5 V1131.5 H581 M565,1152.5 V1156.5 H558 M574,1152.5 V1156.5 H581"/><circle cx="554" cy="1144" r="2"/><circle cx="585" cy="1144" r="2"/><circle cx="556" cy="1131.5" r="2"/><circle cx="583" cy="1131.5" r="2"/><circle cx="556" cy="1156.5" r="2"/><circle cx="583" cy="1156.5" r="2"/></g><rect x="566" y="1140.5" width="7" height="7" fill="#9a9a9a"/><polygon points="621.00,1126.00 635.46,1132.97 639.04,1148.62 629.03,1161.17 612.97,1161.17 602.96,1148.62 606.54,1132.97" fill="#d9d9d9" stroke="#d9d9d9" stroke-width="2" stroke-linejoin="round"/><circle cx="621" cy="1145.0" r="8" stroke="#1f1f1f" stroke-width="2" fill="none"/><path d="M621,1145.0 L632.00,1145.00 M621,1145.0 L628.78,1152.78 M621,1145.0 L621.00,1156.00 M621,1145.0 L613.22,1152.78 M621,1145.0 L610.00,1145.00 M621,1145.0 L613.22,1137.22 M621,1145.0 L621.00,1134.00 M621,1145.0 L628.78,1137.22" stroke="#1f1f1f" stroke-width="1.6"/><circle cx="621" cy="1145.0" r="2.5" fill="#1f1f1f"/><g fill="#d9d9d9"><path d="M675.5,1128 L684,1140.5 H667 Z"/><rect x="669" y="1141" width="17" height="19.5" rx="4"/><circle cx="690.5" cy="1144.5" r="8.3"/></g><path d="M714,1127 Q714,1125.3 715.7,1125.3 H743.5 Q745.2,1125.3 745.2,1127 V1156 L740,1151 H715.7 Q714,1151 714,1149.3 Z" fill="#d9d9d9"/><g fill="#1f1f1f"><rect x="719.5" y="1132" width="20" height="2.2"/><rect x="719.5" y="1136.7" width="20" height="2.2"/><rect x="719.5" y="1141.4" width="20" height="2.2"/></g><rect x="764.6" y="1127.7" width="32.7" height="31.5" rx="7" fill="#d9d9d9"/><path d="M768,1146 Q772,1143 776,1146.5 Q781,1151 786,1147 Q790,1144 794,1146.5 V1152.5 Q794,1155.5 791,1155.5 H771 Q768,1155.5 768,1152.5 Z" fill="#1f1f1f"/><circle cx="786" cy="1136.5" r="2.8" fill="#1f1f1f"/><rect x="816.9" y="1125.4" width="31.7" height="31.6" rx="7" fill="#d9d9d9"/><path d="M824.5,1134.5 V1131.5 H841 V1134.5 M832.7,1131.5 V1151 M829,1151 H836.5" stroke="#1f1f1f" stroke-width="2" fill="none"/><path d="M863.7,1136 H878 V1126.5 H890 Q893,1126.5 893,1129.5 V1152.8 Q893,1155.8 890,1155.8 H866.7 Q863.7,1155.8 863.7,1152.8 Z" fill="#d9d9d9"/><rect x="864.5" y="1127.5" width="12.5" height="6.5" rx="2" stroke="#d9d9d9" stroke-width="1.8" fill="none"/><rect x="922.3" y="1128.3" width="32" height="31.6" rx="8" fill="#d9d9d9"/><path d="M929,1151.5 L944,1136 L947,1139 L932,1154.5 Z" fill="#1f1f1f"/><path d="M944.5,1135.5 L946.5,1133.5 L949.5,1136.5 L947.5,1138.5 Z" fill="#1f1f1f"/><path d="M936,1154 Q942,1153 947,1151" stroke="#1f1f1f" stroke-width="1.2" fill="none"/><circle cx="947.5" cy="1150.5" r="2" stroke="#1f1f1f" stroke-width="1.2" fill="none"/><path d="M947.5,1148.5 V1145" stroke="#1f1f1f" stroke-width="1.2"/><rect x="979.7" y="1128.3" width="32" height="31.6" rx="8" fill="#d9d9d9"/><path d="M987,1148.5 L1000.5,1135 L1004,1138.5 L990.5,1152 L986.5,1152.5 Z" stroke="#1f1f1f" stroke-width="1.8" fill="none" stroke-linejoin="round"/><path d="M998.5,1137 L1002,1140.5" stroke="#1f1f1f" stroke-width="1.6"/><path d="M985,1154.5 Q995,1157 1000,1153 Q1002,1150 998,1150.5" stroke="#1f1f1f" stroke-width="1.2" fill="none"/><rect x="1045.7" y="1128.3" width="31.3" height="31.6" rx="8" fill="#d9d9d9"/><text x="1061.3" y="1153" text-anchor="middle" font-size="24" font-weight="700" fill="#1f1f1f">?</text></g><rect x="0" y="0" width="1599" height="48" fill="#1f2125"/><rect x="0" y="48" width="1599" height="44.5" fill="#37383d"/><circle cx="29.5" cy="30" r="6.3" fill="#fe5f57"/><circle cx="51.3" cy="30" r="6.3" fill="#febc2e"/><circle cx="73" cy="30" r="6.3" fill="#28c840"/><path d="M82,48 Q90,48 90,40 V25 Q90,17 98,17 H303 Q311,17 311,25 V40 Q311,48 319,48 Z" fill="#37383d"/><circle cx="107" cy="29.5" r="7.5" fill="#1aa58e"/><g stroke="#0d6e5e" stroke-width="1" fill="none"><path d="M101,27 L113,32 M101,32 L113,27 M104,23.5 L110,35.5 M110,23.5 L104,35.5"/></g><text x="122" y="33.8" font-size="12" fill="#e6e6e6" textLength="93" lengthAdjust="spacingAndGlyphs">Kanvas | Meshery</text><path d="M291.8,25.8 L299.2,33.2 M299.2,25.8 L291.8,33.2" stroke="#d8d8d8" stroke-width="1.5"/><path d="M329.5,24.5 V35.5 M324,30 H335" stroke="#d8d8d8" stroke-width="1.6"/><rect x="1499.5" y="16" width="77.5" height="27" rx="13" fill="#36383d"/><path d="M1513,23.5 Q1514,29 1519,30 Q1514,31 1513,36.5 Q1512,31 1507,30 Q1512,29 1513,23.5 Z" fill="#e8e8e8"/><text x="1525" y="34.5" font-size="13" font-weight="700" fill="#e6e6e6" textLength="41" lengthAdjust="spacingAndGlyphs">Gemini</text><g stroke="#dedede" stroke-width="1.7" fill="none" stroke-linecap="round" stroke-linejoin="round"><path d="M37,70 H25.5 M30.5,64.8 L25.2,70 L30.5,75.2"/></g><g stroke="#8d8e92" stroke-width="1.7" fill="none" stroke-linecap="round" stroke-linejoin="round"><path d="M59.5,70 H71 M66,64.8 L71.3,70 L66,75.2"/></g><g stroke="#dedede" stroke-width="1.7" fill="none" stroke-linecap="round"><path d="M104.5,67 A5.6,5.6 0 1 0 104.8,72.5"/><path d="M105,63.2 V67.3 H100.9" stroke-linejoin="round"/></g><rect x="125" y="54.2" width="1329" height="31.6" rx="15.8" fill="#27292d"/><circle cx="140" cy="70" r="12" fill="#1f2124"/><g stroke="#dcdcdc" stroke-width="1.5" fill="none"><circle cx="135.8" cy="66.5" r="2"/><path d="M139,66.5 H145"/><circle cx="144.2" cy="73.5" r="2"/><path d="M135,73.5 H141"/></g><text x="159" y="75" font-size="14.3" fill="#e8e8e8" textLength="631" lengthAdjust="spacingAndGlyphs">kanvas.new/extension/meshmap?mode=design&amp;design=3f0e7d8a-d54b-4d39-81bd-d81694864b15</text><g stroke="#dcdcdc" stroke-width="1.5" fill="none"><rect x="1395" y="65" width="11.5" height="12.5" rx="1"/><path d="M1398.5,64.5 H1403 V66.5 H1398.5 Z" fill="#dcdcdc"/></g><path d="M1431,63.5 L1433.2,68.3 L1438.2,68.7 L1434.3,72 L1435.6,77 L1431,74.3 L1426.4,77 L1427.7,72 L1423.8,68.7 L1428.8,68.3 Z" stroke="#dcdcdc" stroke-width="1.5" fill="none" stroke-linejoin="round"/><g stroke="#dcdcdc" stroke-width="1.6" fill="none"><path d="M1478,77 H1471.5 V64.5 H1476"/><rect x="1479" y="63.5" width="7.5" height="3.5" fill="#dcdcdc" stroke="none"/><circle cx="1481.5" cy="73" r="3.2"/><path d="M1484,75.5 L1486.5,78"/></g><path d="M1504.4,62 V80" stroke="#55575c" stroke-width="1"/><circle cx="1529.3" cy="71" r="10" fill="#5c6bc8"/><text x="1529.3" y="75.5" text-anchor="middle" font-size="12" fill="#e8eaff">C</text><g fill="#dcdcdc"><circle cx="1563.4" cy="65.5" r="1.6"/><circle cx="1563.4" cy="71" r="1.6"/><circle cx="1563.4" cy="76.5" r="1.6"/></g><rect x="0" y="92.5" width="1599" height="96" fill="#212121"/><polygon points="40.20,123.70 54.58,132.00 40.2,140.3" fill="#20cca8"/><polygon points="54.58,132.00 54.58,148.60 40.2,140.3" fill="#19b596"/><polygon points="54.58,148.60 40.20,156.90 40.2,140.3" fill="#20cca8"/><polygon points="40.20,156.90 25.82,148.60 40.2,140.3" fill="#19b596"/><polygon points="25.82,148.60 25.82,132.00 40.2,140.3" fill="#20cca8"/><polygon points="25.82,132.00 40.20,123.70 40.2,140.3" fill="#19b596"/><path d="M40.20,123.70 L40.20,156.90 M54.58,132.00 L25.82,148.60 M54.58,148.60 L25.82,132.00" stroke="#163c36" stroke-width="1.5"/><polygon points="40.20,123.70 54.58,132.00 54.58,148.60 40.20,156.90 25.82,148.60 25.82,132.00" fill="none" stroke="#12302b" stroke-width="1"/><path d="M64.6,130.9 H68.8 V151.5 H64.6 Z M68.8,141.2 L80.1,130.9 H84.4 L68.8,146.2 Z M72.2,142.6 L75.4,140.2 L84.6,151.5 H78.6 Z M85.80,151.5 L93.20,130.9 H97.40 L90.20,151.5 Z M93.20,130.9 H97.40 L104.70,151.5 H100.40 Z M92.00,147.4 H103.40 L104.70,151.5 H92.00 Z M105.1,130.9 H123 Q126.1,130.9 126.1,134.3 V151.5 H121.8 V136.4 H105.1 Z M107.3,137.6 H111.1 V151.5 H107.3 Z M126.8,130.9 H131.6 L137.3,146.5 L142.9,130.9 H147.4 L139.8,151.5 H134.6 Z M143.60,151.5 L150.49,130.9 H154.40 L147.70,151.5 Z M150.49,130.9 H154.40 L161.20,151.5 H157.20 Z M149.37,147.4 H159.99 L161.20,151.5 H149.37 Z M166,130.9 H182.4 V136.2 H167.6 V138.9 H179.2 Q182.4,138.9 182.4,142.1 V148.3 Q182.4,151.5 179.2,151.5 H162.7 V146.3 H177.6 V144.1 H166 Q162.7,144.1 162.7,140.8 V134.2 Q162.7,130.9 166,130.9 Z" fill="#ffffff"/><g fill="#e0e0e0"><rect x="215" y="128" width="17" height="25"/><rect x="210" y="136" width="6" height="17"/><rect x="231" y="136" width="6.5" height="17"/></g><g fill="#212121"><rect x="218" y="131" width="2" height="2.5"/><rect x="218" y="135.5" width="2" height="2.5"/><rect x="218" y="140" width="2" height="2.5"/><rect x="218" y="144.5" width="2" height="2.5"/><rect x="222.5" y="131" width="2" height="2.5"/><rect x="222.5" y="135.5" width="2" height="2.5"/><rect x="222.5" y="140" width="2" height="2.5"/><rect x="222.5" y="144.5" width="2" height="2.5"/><rect x="227" y="131" width="2" height="2.5"/><rect x="227" y="135.5" width="2" height="2.5"/><rect x="227" y="140" width="2" height="2.5"/><rect x="227" y="144.5" width="2" height="2.5"/><rect x="212" y="139" width="2" height="2"/><rect x="233.5" y="139" width="2" height="2"/><rect x="212" y="143" width="2" height="2"/><rect x="233.5" y="143" width="2" height="2"/><rect x="212" y="147" width="2" height="2"/><rect x="233.5" y="147" width="2" height="2"/><rect x="221.5" y="148" width="4" height="5"/></g><path d="M265,128 L256,152" stroke="#d0d0d0" stroke-width="1.6"/><g fill="#f0f0f0"><path d="M295.8,128 L302,138 H289.6 Z" stroke="#f0f0f0" stroke-width="2" stroke-linejoin="round"/><rect x="283" y="141.5" width="12.3" height="11.8" rx="2.2"/><circle cx="302.4" cy="147.2" r="6.2"/></g><path d="M337,128 L328,152" stroke="#d0d0d0" stroke-width="1.6"/><text x="341.5" y="146.5" font-size="15" fill="#b8b8b8" textLength="84.5" lengthAdjust="spacingAndGlyphs">aws ec2.yaml</text><g stroke="#d8d8d8" stroke-width="1.3" fill="none"><circle cx="457.50" cy="140.50" r="2.3"/><circle cx="455.45" cy="145.45" r="2.3"/><circle cx="450.50" cy="147.50" r="2.3"/><circle cx="445.55" cy="145.45" r="2.3"/><circle cx="443.50" cy="140.50" r="2.3"/><circle cx="445.55" cy="135.55" r="2.3"/><circle cx="450.50" cy="133.50" r="2.3"/><circle cx="455.45" cy="135.55" r="2.3"/><circle cx="450.5" cy="140.5" r="2.6"/></g><path d="M481,148 H497 A4.5,4.5 0 0 0 497.5,139 A6.5,6.5 0 0 0 485,137 A5.5,5.5 0 0 0 481,148 Z" stroke="#d8d8d8" stroke-width="1.6" fill="none"/><path d="M485.5,142 L488.5,145 L494,139.5" stroke="#d8d8d8" stroke-width="1.6" fill="none"/><rect x="797.5" y="157" width="103.5" height="32" rx="4" fill="#1c4741"/><circle cx="820.5" cy="171" r="6.5" stroke="#00b39f" stroke-width="2.6" fill="none" stroke-dasharray="6 1.5"/><text x="838.5" y="176.5" font-size="15" fill="#e2e2e2" textLength="48" lengthAdjust="spacingAndGlyphs">Design</text><rect x="904" y="157" width="112" height="32" rx="4" fill="#232323"/><g fill="#3e3e3e"><circle cx="927.5" cy="166" r="5"/><path d="M919,181 Q919,171.5 927.5,171.5 Q936,171.5 936,181 Z"/></g><text x="948.5" y="176.5" font-size="15" fill="#4a4a4a" textLength="56" lengthAdjust="spacingAndGlyphs">Operate</text><defs><clipPath id="av1"><circle cx="1287.9" cy="140" r="15"/></clipPath></defs><circle cx="1287.9" cy="140" r="16" fill="#cfc8bf"/><g clip-path="url(#av1)"><rect x="1270" y="122" width="36" height="36" fill="#cdc6ba"/><ellipse cx="1288" cy="140" rx="9" ry="12.5" fill="#a8865e"/><ellipse cx="1288" cy="137.5" rx="5.2" ry="6.8" fill="#e6c7a8"/><path d="M1274,158 Q1276,148.5 1288,148.5 Q1300,148.5 1302,158 Z" fill="#262626"/></g><circle cx="1314.7" cy="140" r="16" fill="#ededed" stroke="#c8c8c8" stroke-width="1"/><g stroke="#9a9a9a" stroke-width="1" fill="none"><circle cx="1314.7" cy="139" r="9"/><path d="M1310,137 L1312,138 M1317,138 L1319,137 M1311,143 Q1314.7,145 1318,143"/></g><circle cx="1340.5" cy="140" r="16" fill="#7a7a7a" stroke="#d0d0d0" stroke-width="1.5"/><g fill="#1b1b1b"><circle cx="1340.5" cy="135.5" r="4"/><path d="M1332.5,147.5 Q1332.5,141 1340.5,141 Q1348.5,141 1348.5,147.5 Z"/></g><circle cx="1366.3" cy="140" r="16" fill="#7a7a7a" stroke="#d0d0d0" stroke-width="1.5"/><g fill="#1b1b1b"><circle cx="1366.3" cy="135.5" r="4"/><path d="M1358.3,147.5 Q1358.3,141 1366.3,141 Q1374.3,141 1374.3,147.5 Z"/></g><polygon points="1415.80,130.50 1424.01,134.45 1426.04,143.34 1420.36,150.46 1411.24,150.46 1405.56,143.34 1407.59,134.45" fill="#326ce5"/><circle cx="1415.8" cy="141" r="4.5" stroke="#dfe8ff" stroke-width="1.4" fill="none"/><circle cx="1429" cy="134.5" r="9" fill="#f6f6f6"/><text x="1429" y="138.5" text-anchor="middle" font-size="11" fill="#333">0</text><path d="M1461.2,131 Q1467,131.5 1467,139 V144.5 L1469,147 H1453.4 L1455.4,144.5 V139 Q1455.4,131.5 1461.2,131 Z" fill="#f2f2f2"/><circle cx="1461.2" cy="149" r="2" fill="#f2f2f2"/><circle cx="1461.2" cy="130" r="1.5" fill="#f2f2f2"/><circle cx="1507" cy="140" r="17" fill="#7b7b7b"/><g fill="#1c1c1c"><circle cx="1507" cy="134.5" r="5"/><path d="M1497,149.5 Q1497,141.5 1507,141.5 Q1517,141.5 1517,149.5 Z"/></g><g fill="#f0f0f0"><rect x="1542.5" y="133" width="20.5" height="2.2"/><rect x="1542.5" y="139" width="20.5" height="2.2"/><rect x="1542.5" y="145" width="20.5" height="2.2"/></g><rect x="0" y="187.8" width="759.6" height="1.3" fill="#1f5e55"/><rect x="962.3" y="187.8" width="640" height="1.3" fill="#1f5e55"/></g><rect x="10.5" y="11" width="1574" height="1194" rx="13" fill="none" stroke="#3a3a3a" stroke-width="1"/></svg></body></html>
